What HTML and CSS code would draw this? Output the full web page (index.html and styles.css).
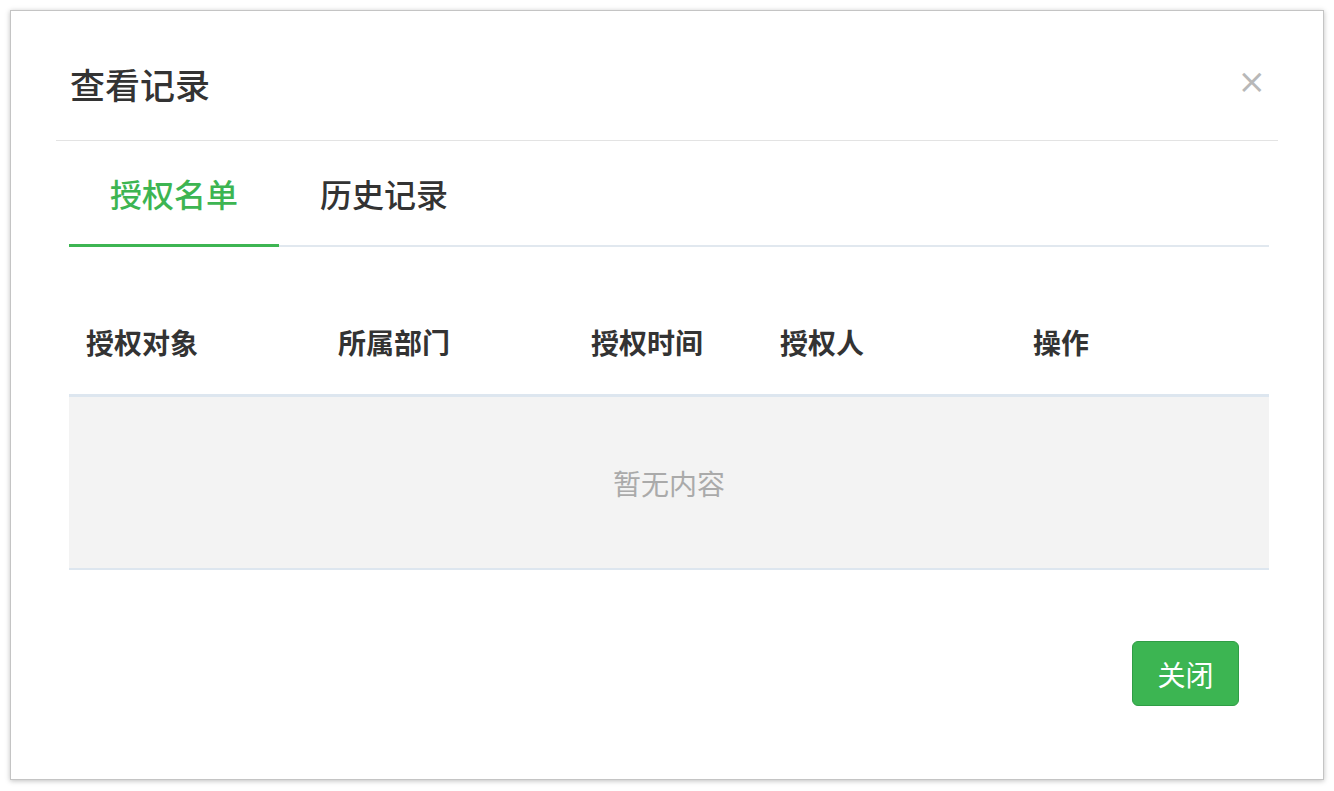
FILE: index.html
```
<!DOCTYPE html>
<html lang="zh-CN">
	<head>
		<meta charset="utf-8">
		<title>查看记录</title>
		<link rel="stylesheet" href="styles.css">
	</head>
	<body>
	<div class="dialog">
		<div class="dialog-header">
			<h2 class="dialog-title">查看记录</h2>
			<span class="dialog-close">&times;</span>
		</div>
		<div class="dialog-body">
			<ul class="tabs">
				<li class="tab active">授权名单</li>
				<li class="tab">历史记录</li>
			</ul>
			<table class="list">
				<colgroup>
					<col style="width:252px">
					<col style="width:253px">
					<col style="width:189px">
					<col style="width:253px">
					<col style="width:253px">
				</colgroup>
				<thead>
					<tr>
						<th>授权对象</th>
						<th>所属部门</th>
						<th>授权时间</th>
						<th>授权人</th>
						<th>操作</th>
					</tr>
				</thead>
				<tbody>
					<tr>
						<td colspan="5" class="empty">暂无内容</td>
					</tr>
				</tbody>
			</table>
			<div class="dialog-footer">
				<button type="button" class="btn-close">关闭</button>
			</div>
		</div>
	</div>
	</body>
</html>
```

FILE: styles.css
```
html, body {
	margin: 0;
	background: #fff;
}
body {
	padding: 10px;
	font-family: "Noto Sans CJK SC", "Noto Sans", sans-serif;
	color: #333;
}
.dialog {
	width: 1312px;
	height: 768px;
	border: 1px solid #c4c4c4;
	box-shadow: 0 1px 5px rgba(0,0,0,0.25);
	background: #fff;
	box-sizing: content-box;
}
.dialog-header {
	position: relative;
	margin: 0 45px;
	height: 129px;
	border-bottom: 1px solid #e3e3e3;
}
.dialog-title {
	margin: 0;
	padding: 55px 0 0 14px;
	font-size: 35px;
	line-height: 36px;
	font-weight: 500;
	color: #333;
}
.dialog-close {
	position: absolute;
	top: 50px;
	right: 12px;
	font-family: "DejaVu Sans", sans-serif;
	font-size: 34px;
	line-height: 40px;
	color: #b8b8b8;
	cursor: pointer;
}
.dialog-body {
	padding: 0 54px 0 58px;
}
.tabs {
	list-style: none;
	margin: 0;
	padding: 0;
	display: flex;
	border-bottom: 2px solid #e1e8ef;
}
.tab {
	padding: 36px 41px 35px 41px;
	font-size: 32px;
	line-height: 32px;
	font-weight: 500;
	border-bottom: 3px solid transparent;
	margin-bottom: -2px;
	color: #333;
}
.tab.active {
	color: #3db552;
	border-bottom-color: #3db552;
}
.list {
	width: 1200px;
	margin-top: 43px;
	border-collapse: collapse;
	table-layout: fixed;
}
.list th {
	height: 104px;
	padding: 0 0 0 17px;
	text-align: left;
	font-size: 28px;
	font-weight: bold;
	color: #333;
	vertical-align: middle;
	border-bottom: 3px solid #dde6ef;
}
.list td.empty {
	height: 171px;
	padding: 0;
	background: #f3f3f3;
	text-align: center;
	vertical-align: middle;
	font-size: 28px;
	color: #aaa;
	border-bottom: 2px solid #dde6ef;
}
.dialog-footer {
	display: flex;
	justify-content: flex-end;
	padding: 71px 30px 0 0;
}
.btn-close {
	width: 107px;
	height: 65px;
	border: 1px solid #2f9d45;
	border-radius: 6px;
	background: #3cb552;
	color: #fff;
	font-family: "Noto Sans CJK SC", sans-serif;
	font-size: 28px;
	padding: 0;
	cursor: pointer;
}
```
